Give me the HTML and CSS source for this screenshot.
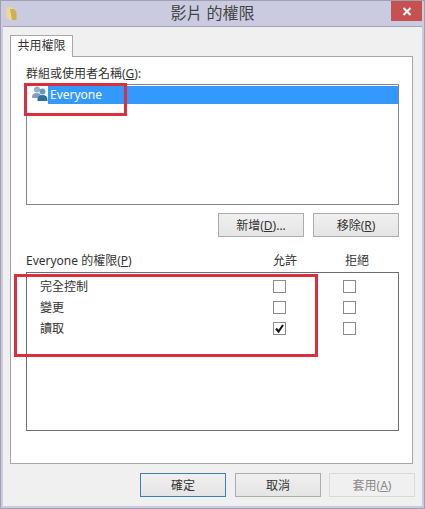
FILE: index.html
```html
<!DOCTYPE html>
<html lang="zh-Hant">

<head>
    <meta charset="UTF-8">
    <title>影片 的權限</title>
    <link rel="stylesheet" href="styles.css">
</head>

<body>
    <div class="window">
        <div class="titlebar">
            <svg class="folder-icon" width="12" height="15" viewBox="0 0 12 15">
                <path d="M0.5 1.5 L5 1 L8 3 L8 14 L4 14 L0.5 11 Z" fill="#f0d98a" />
                <path d="M4 3 L8 3 L10.5 6 L10.5 14 L6 14 Z" fill="#cfae55" />
            </svg>
            <div class="title">影片 的權限</div>
            <button class="close-btn">
                <svg width="10" height="9" viewBox="0 0 10 9">
                    <path d="M1.5 1 L8.5 8 M8.5 1 L1.5 8" stroke="#fff" stroke-width="2" />
                </svg>
            </button>
        </div>

        <div class="content">
            <div class="tab">共用權限</div>
            <div class="panel">
                <div class="group-label">群組或使用者名稱(<u>G</u>):</div>
                <div class="listbox">
                    <div class="list-row">
                        <svg class="users-icon" width="16" height="15" viewBox="0 0 16 15">
                            <circle cx="5" cy="3.5" r="3" fill="#8fb0cf" />
                            <path d="M0 11 Q0 7 5 7 Q9 7 9 11 L9 12 L0 12 Z" fill="#7f9fc2" />
                            <circle cx="10.5" cy="5.5" r="3" fill="#5f9cbe" />
                            <path d="M5.5 14 Q5.5 9 10.5 9 Q15.5 9 15.5 14 L15.5 15 L5.5 15 Z" fill="#2f6f9a" />
                        </svg>
                        <span class="list-name">Everyone</span>
                    </div>
                </div>
                <div class="list-buttons">
                    <button class="btn">新增(<u>D</u>)...</button>
                    <button class="btn">移除(<u>R</u>)</button>
                </div>

                <div class="perm-head">
                    <span>Everyone 的權限(<u>P</u>)</span>
                    <span>允許</span>
                    <span>拒絕</span>
                </div>
                <div class="perm-box">
                    <div class="perm-row">
                        <span class="perm-name">完全控制</span>
                        <span class="perm-col"><span class="check"></span></span>
                        <span class="perm-col"><span class="check"></span></span>
                    </div>
                    <div class="perm-row">
                        <span class="perm-name">變更</span>
                        <span class="perm-col"><span class="check"></span></span>
                        <span class="perm-col"><span class="check"></span></span>
                    </div>
                    <div class="perm-row">
                        <span class="perm-name">讀取</span>
                        <span class="perm-col">
                            <span class="check">
                                <svg width="11" height="11" viewBox="0 0 11 11">
                                    <path d="M2 5.5 L4.5 8.5 L9 2" fill="none" stroke="#111" stroke-width="2" />
                                </svg>
                            </span>
                        </span>
                        <span class="perm-col"><span class="check"></span></span>
                    </div>
                </div>
            </div>

            <div class="footer">
                <button class="btn btn-default">確定</button>
                <button class="btn">取消</button>
                <button class="btn btn-disabled">套用(<u>A</u>)</button>
            </div>
        </div>

        <!-- 紅框標註 -->
        <div class="mark mark-user"></div>
        <div class="mark mark-perm"></div>
    </div>
</body>

</html>
```
FILE: styles.css
```css
html,
body {
    margin: 0;
    padding: 0;
}

body {
    font-family: "Noto Sans", "Noto Sans CJK TC", sans-serif;
    font-size: 12px;
    color: #333;
    background-color: #fff;
}

.window {
    position: relative;
    width: 425px;
    height: 509px;
    box-sizing: border-box;
    background-color: #cacbe0;
    border: 1px solid #a0a0ae;
    padding: 0 2px 2px 2px;
    display: flex;
    flex-direction: column;
}

.titlebar {
    height: 26px;
    box-sizing: border-box;
    flex: none;
    position: relative;
    display: flex;
    align-items: center;
    justify-content: center;
    padding-bottom: 3px;
    border-bottom: 1px solid #a3a4b4;
}

.folder-icon {
    position: absolute;
    left: 3px;
    top: 5px;
}

.title {
    font-size: 16px;
    color: #444;
}

.close-btn {
    position: absolute;
    top: 0;
    right: 0;
    width: 31px;
    height: 20px;
    padding: 0;
    border: none;
    background-color: #c75050;
    display: flex;
    align-items: center;
    justify-content: center;
}

.content {
    flex: 1;
    background-color: #f0f0f0;
    padding: 8px 9px 0 7px;
    display: flex;
    flex-direction: column;
}

.tab {
    align-self: flex-start;
    width: 63px;
    height: 22px;
    box-sizing: border-box;
    border: 1px solid #a8a8a8;
    border-bottom: none;
    background-color: #fff;
    text-align: center;
    line-height: 19px;
    position: relative;
    margin-bottom: -1px;
    z-index: 1;
}

.panel {
    height: 408px;
    box-sizing: border-box;
    background-color: #fff;
    border: 1px solid #a8a8a8;
    padding: 8px 13px 0 15px;
}

.group-label {
    height: 19px;
    line-height: 17px;
}

u {
    text-underline-offset: 1px;
}

.listbox {
    height: 121px;
    box-sizing: border-box;
    border: 1px solid #828790;
    padding: 1px 0 0 5px;
}

.list-row {
    display: flex;
    align-items: flex-start;
    height: 18px;
}

.users-icon {
    flex: none;
}

.list-name {
    flex: 1;
    align-self: stretch;
    padding-left: 2px;
    line-height: 18px;
    color: #fff;
    background-color: #3399ff;
}

.list-buttons {
    display: flex;
    justify-content: flex-end;
    gap: 9px;
    margin-top: 8px;
}

.btn {
    width: 86px;
    height: 24px;
    padding: 0;
    font-family: inherit;
    font-size: 12px;
    color: #333;
    border: 1px solid #acacac;
    background: linear-gradient(#f0f0f0, #e5e5e5);
}

.perm-head {
    display: grid;
    grid-template-columns: 247px 72px 1fr;
    align-items: center;
    margin-top: 12px;
    margin-bottom: 2px;
    height: 21px;
}

.perm-box {
    height: 159px;
    box-sizing: border-box;
    border: 1px solid #6d6d6d;
    padding-top: 3px;
}

.perm-row {
    display: flex;
    align-items: center;
    height: 21px;
}

.perm-name {
    width: 218px;
    box-sizing: border-box;
    padding-left: 13px;
    padding-bottom: 2px;
}

.perm-col {
    width: 70px;
    box-sizing: border-box;
    padding-left: 28px;
}

.check {
    width: 13px;
    height: 13px;
    box-sizing: border-box;
    border: 1px solid #8a8a8a;
    background-color: #fff;
    display: flex;
    align-items: center;
    justify-content: center;
}

.footer {
    display: flex;
    justify-content: flex-end;
    gap: 8px;
    margin-top: 9px;
    margin-right: -2px;
}

.btn-default {
    margin-right: 1px;
    border-color: #3c7fb1;
}

.btn-disabled {
    color: #8a8a8a;
    border-color: #d9d9d9;
    background: #f0f0f0;
}

.mark {
    position: absolute;
    box-sizing: border-box;
    border: 3px solid #dc2f3e;
    z-index: 2;
}

.mark-user {
    left: 23px;
    top: 82px;
    width: 103px;
    height: 33px;
}

.mark-perm {
    left: 13px;
    top: 273px;
    width: 304px;
    height: 83px;
}
```
